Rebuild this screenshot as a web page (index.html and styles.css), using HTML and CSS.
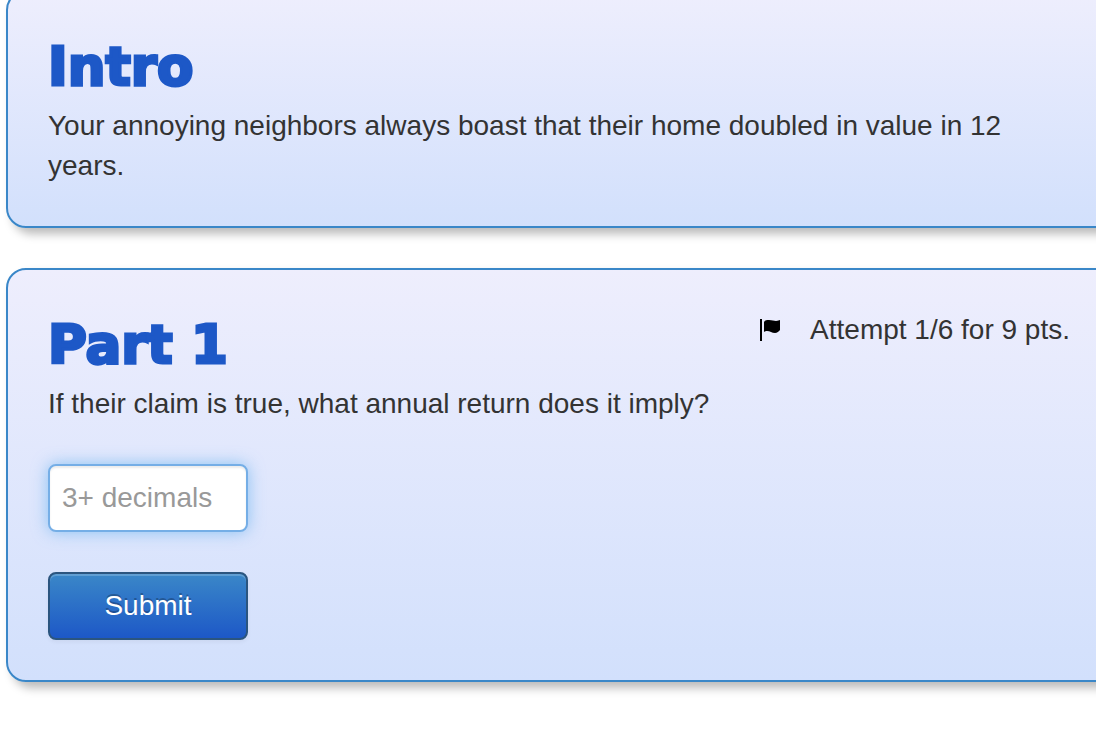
FILE: index.html
```
<!DOCTYPE html>
<html lang="en">
<head>
    <meta charset="UTF-8">
    <meta name="viewport" content="width=device-width, initial-scale=1.0">
    <title>Part 1</title>
    <link rel="stylesheet" href="styles.css">
</head>
<body>
    <div class="page">
        <main class="problem">
            <section class="card">
                <h1>Intro</h1>
                <p>Your annoying neighbors always boast that their home doubled in value in 12 years.</p>
            </section>

            <section class="card">
                <div class="card-header">
                    <h1>Part 1</h1>
                    <div class="attempt">
                        <svg class="flag" viewBox="0 0 20 22" aria-hidden="true">
                            <path d="M0 0h2v22H0z"/>
                            <path d="M4 3C5 1 7 1 9 1c3 0 5 1 7 1c2 0 3-1 4-1v10c-1 1-3 3-5 3c-3 0-5-2-8-2c-1 0-2 0-3 1z"/>
                        </svg>
                        <span>Attempt 1/6 for 9 pts.</span>
                    </div>
                </div>
                <p><label for="answer">If their claim is true, what annual return does it imply?</label></p>
                <form>
                    <input type="text" id="answer" class="answer" placeholder="3+ decimals">
                    <button type="button" class="submit">Submit</button>
                </form>
            </section>
        </main>
    </div>
</body>
</html>
```

FILE: styles.css
```
* {
    box-sizing: border-box;
}

body {
    margin: 0;
    background-color: #fff;
    color: #333;
    font-family: "Liberation Sans", Arial, sans-serif;
    font-size: 28px;
    line-height: 40px;
}

/* the column is a bit wider than the window and gets cut off */
.page {
    overflow: hidden;
    padding-bottom: 40px;
}

.problem {
    display: flex;
    flex-direction: column;
    gap: 40px;
    margin: -10px -40px 0 6px;
}

.card {
    padding: 40px 64px 40px 40px;
    border: 2px solid #3a87c8;
    border-radius: 20px;
    background: linear-gradient(#eeeefd, #d2e0fc);
    box-shadow: 6px 6px 10px #bbb;
}

.card-header {
    display: flex;
    justify-content: space-between;
    align-items: flex-start;
}

h1 {
    margin: 0 0 4px;
    color: #1d58c7;
    font-family: "DejaVu Sans", "Arial Black", sans-serif;
    font-size: 53px;
    font-weight: 900;
    line-height: 70px;
    -webkit-text-stroke: 3px #1d58c7;
}

p {
    margin: 0;
}

.attempt {
    display: flex;
    align-items: center;
    gap: 30px;
}

.flag {
    width: 20px;
    height: 22px;
    fill: #000;
}

form {
    display: flex;
    flex-direction: column;
    align-items: flex-start;
    gap: 40px;
    margin-top: 40px;
}

.answer,
.submit {
    width: 200px;
    height: 68px;
    border-radius: 8px;
    font-family: inherit;
    font-size: 28px;
}

.answer {
    padding: 8px 12px;
    border: 2px solid #75aee6;
    background-color: #fff;
    color: #555;
    outline: none;
    box-shadow: inset 0 2px 2px rgba(0, 0, 0, 0.075), 0 0 16px rgba(82, 168, 236, 0.6);
}

.answer::placeholder {
    color: #999;
    opacity: 1;
}

.submit {
    border: 2px solid #2b557f;
    background: linear-gradient(#3a87c8, #1d58c7);
    color: #fff;
    text-shadow: 0 -2px 0 rgba(0, 0, 0, 0.25);
    box-shadow: inset 0 2px 0 rgba(255, 255, 255, 0.2), 0 2px 4px rgba(0, 0, 0, 0.05);
    cursor: pointer;
}
```
